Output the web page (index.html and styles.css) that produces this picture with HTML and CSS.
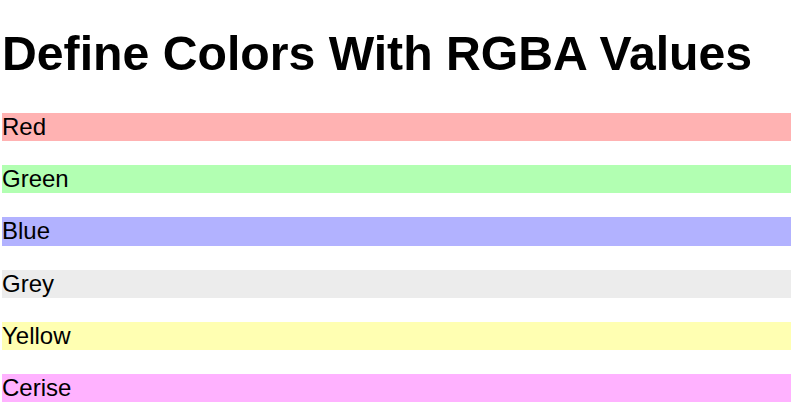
FILE: index.html
```html
<!DOCTYPE html>
<html>
<head>
<meta charset="utf-8">
<link rel="stylesheet" href="styles.css">
</head>
<body>
<h1 class="title">Define Colors With RGBA Values</h1>
<p class="bar red">Red</p>
<p class="bar green">Green</p>
<p class="bar blue">Blue</p>
<p class="bar grey">Grey</p>
<p class="bar yellow">Yellow</p>
<p class="bar cerise">Cerise</p>
</body>
</html>
```
FILE: styles.css
```css
html, body {
  background: #fff;
}
body {
  margin: 0 0 0 2px;
  font-family: "Liberation Sans", Arial, sans-serif;
  color: #000;
}
.title {
  font-size: 48.2px;
  font-weight: bold;
  margin: 25px 0 32px;
}
.bar {
  font-size: 24px;
  line-height: 28.2px;
  margin: 24px 0;
}
.red { background-color: rgba(255, 0, 0, 0.3); }
.green { background-color: rgba(0, 255, 0, 0.3); }
.blue { background-color: rgba(0, 0, 255, 0.3); }
.grey { background-color: rgba(192, 192, 192, 0.3); }
.yellow { background-color: rgba(255, 255, 0, 0.3); }
.cerise { background-color: rgba(255, 0, 255, 0.3); }
```
